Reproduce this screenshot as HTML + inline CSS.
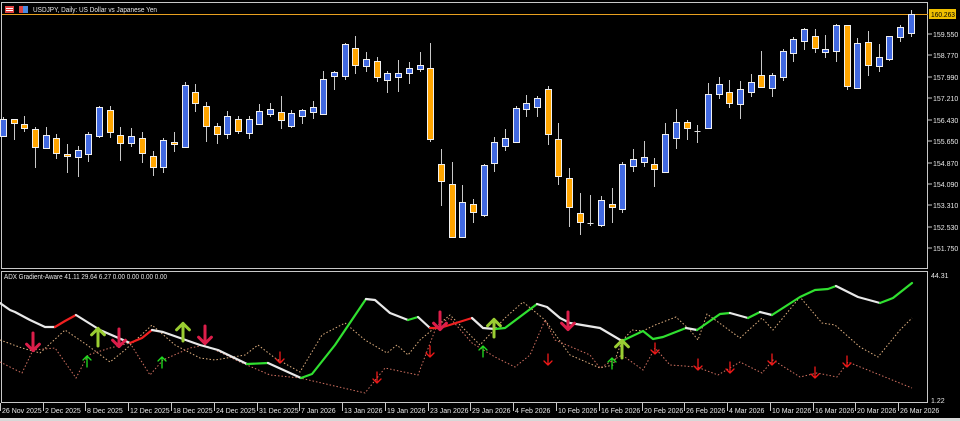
<!DOCTYPE html>
<html><head><meta charset="utf-8"><style>
html,body{margin:0;padding:0;background:#000;width:960px;height:421px;overflow:hidden}
svg{display:block}
text{font-family:"Liberation Sans",sans-serif;font-size:7px;fill:#e8e8e8}
</style></head><body>
<svg id="s" width="960" height="421" viewBox="0 0 960 421" xmlns="http://www.w3.org/2000/svg">
<rect width="960" height="421" fill="#000"/>
<rect x="1.5" y="2.5" width="926" height="266" fill="none" stroke="#c8c8c8"/>
<rect x="1.5" y="271.5" width="926" height="131" fill="none" stroke="#c8c8c8"/>
<line x1="2" y1="14.5" x2="928" y2="14.5" stroke="#e8a020"/>
<rect x="5" y="6" width="9" height="7" fill="#e04040"/><rect x="6" y="8" width="7" height="1" fill="#fff"/><rect x="6" y="10" width="7" height="1" fill="#fff"/>
<rect x="19" y="6" width="9" height="7" fill="#4a8ae0"/><rect x="19" y="6" width="4" height="7" fill="#e04040"/>
<text x="33" y="12" textLength="124" lengthAdjust="spacingAndGlyphs">USDJPY, Daily:  US Dollar vs Japanese Yen</text>
<g id="candles"></g>
<g stroke="#c8c8c8">
<line x1="928" y1="34" x2="932" y2="34"/><line x1="928" y1="55" x2="932" y2="55"/><line x1="928" y1="77" x2="932" y2="77"/><line x1="928" y1="98" x2="932" y2="98"/><line x1="928" y1="120" x2="932" y2="120"/><line x1="928" y1="141" x2="932" y2="141"/><line x1="928" y1="163" x2="932" y2="163"/><line x1="928" y1="184" x2="932" y2="184"/><line x1="928" y1="205" x2="932" y2="205"/><line x1="928" y1="227" x2="932" y2="227"/><line x1="928" y1="248" x2="932" y2="248"/>
</g>
<rect x="929" y="9" width="27" height="10" fill="#f0c000"/>
<text x="931" y="17" style="fill:#000" textLength="24" lengthAdjust="spacingAndGlyphs">160.263</text>
<g id="pl"></g>
<text x="931" y="278">44.31</text><text x="931" y="403">1.22</text>
<text x="4" y="279" textLength="163" lengthAdjust="spacingAndGlyphs">ADX Gradient-Aware 41.11 29.64 6.27 0.00 0.00 0.00 0.00</text>
<polyline fill="none" stroke="#e0b080" stroke-width="1" stroke-dasharray="1.5,2" points="0,340 22,348 40,353 65,330 87,345 110,362 125,350 152,325 175,345 200,358 215,360 245,355 258,345 275,358 300,372 322,335 345,323 365,340 387,353 397,345 408,355 420,340 450,315 480,345 505,318 523,302 545,320 570,355 600,368 613,365 622,341 632,330 643,331 655,325 676,317 690,330 698,340 707,314 740,338 762,318 773,330 800,297 822,323 835,325 860,347 878,357 900,330 912,318"/>
<polyline fill="none" stroke="#d07060" stroke-width="1" stroke-dasharray="1.5,2" points="0,362 22,373 33,350 55,348 76,378 88,355 110,348 130,343 150,375 163,360 190,348 205,345 240,362 270,375 300,378 365,393 385,368 418,375 437,325 450,318 472,343 495,357 515,367 530,355 545,320 555,340 590,355 600,368 622,355 643,370 655,348 670,365 697,367 718,375 740,362 762,373 773,360 800,377 817,373 837,377 848,362 912,388"/>
<g fill="none" stroke-width="2.2" stroke-linejoin="round" stroke-linecap="round">
<polyline stroke="#e8e8e8" points="0,303 10,310 15,312 30,320 45,327 55,327"/>
<polyline stroke="#f02020" points="55,327 65,321 76,315"/>
<polyline stroke="#e8e8e8" points="76,315 100,330 130,343"/>
<polyline stroke="#f02020" points="130,343 142,338 152,330"/>
<polyline stroke="#e8e8e8" points="152,330 163,332 200,345 218,350 247,364"/>
<polyline stroke="#30e030" points="247,364 268,363"/>
<polyline stroke="#e8e8e8" points="268,363 301,378"/>
<polyline stroke="#30e030" points="301,378 312,374 335,345 366,299"/>
<polyline stroke="#e8e8e8" points="366,299 375,300 390,313 408,320"/>
<polyline stroke="#30e030" points="408,320 418,317"/>
<polyline stroke="#e8e8e8" points="418,317 430,328"/>
<polyline stroke="#f02020" points="430,328 440,328 472,318"/>
<polyline stroke="#e8e8e8" points="472,318 483,328 495,329"/>
<polyline stroke="#30e030" points="495,329 505,328 537,304"/>
<polyline stroke="#e8e8e8" points="537,304 547,307 560,318 570,323 600,328 622,341"/>
<polyline stroke="#30e030" points="622,341 643,331 653,339 663,337 686,328"/>
<polyline stroke="#e8e8e8" points="686,328 697,330"/>
<polyline stroke="#30e030" points="697,330 720,314 730,313"/>
<polyline stroke="#e8e8e8" points="730,313 748,318"/>
<polyline stroke="#30e030" points="748,318 760,312"/>
<polyline stroke="#e8e8e8" points="760,312 772,315"/>
<polyline stroke="#30e030" points="772,315 800,297 815,290 828,289 836,286"/>
<polyline stroke="#e8e8e8" points="836,286 858,297 880,303"/>
<polyline stroke="#30e030" points="880,303 893,298 912,283"/>
</g>
<g id="arrows"></g>
<g stroke="#c8c8c8" id="ticks"></g>
<g id="tl">
<text x="2" y="413">26 Nov 2025</text><text x="45" y="413">2 Dec 2025</text><text x="87" y="413">8 Dec 2025</text><text x="130" y="413">12 Dec 2025</text><text x="173" y="413">18 Dec 2025</text><text x="216" y="413">24 Dec 2025</text><text x="259" y="413">31 Dec 2025</text><text x="301" y="413">7 Jan 2026</text><text x="344" y="413">13 Jan 2026</text><text x="387" y="413">19 Jan 2026</text><text x="430" y="413">23 Jan 2026</text><text x="472" y="413">29 Jan 2026</text><text x="515" y="413">4 Feb 2026</text><text x="558" y="413">10 Feb 2026</text><text x="601" y="413">16 Feb 2026</text><text x="644" y="413">20 Feb 2026</text><text x="686" y="413">26 Feb 2026</text><text x="729" y="413">4 Mar 2026</text><text x="772" y="413">10 Mar 2026</text><text x="815" y="413">16 Mar 2026</text><text x="857" y="413">20 Mar 2026</text><text x="900" y="413">26 Mar 2026</text>
</g>
<text x="933" y="37">159.550</text><text x="933" y="58">158.770</text><text x="933" y="80">157.990</text><text x="933" y="101">157.210</text><text x="933" y="123">156.430</text><text x="933" y="144">155.650</text><text x="933" y="166">154.870</text><text x="933" y="187">154.090</text><text x="933" y="208">153.310</text><text x="933" y="230">152.530</text><text x="933" y="251">151.750</text>
<rect x="0" y="418" width="960" height="3" fill="#d8d8d8"/>
</svg>
<script>
var NS="http://www.w3.org/2000/svg";
function el(p,t,a){var e=document.createElementNS(NS,t);for(var k in a)e.setAttribute(k,a[k]);p.appendChild(e);return e;}
var C=[["b",119,136,117,137],["o",119,123,119,140],["o",124,128,116,132],["o",129,147,127,168],["b",135,148,127,148],["o",138,153,134,159],["o",154,156,144,173],["b",150,157,146,177],["b",134,154,132,162],["b",107,136,106,138],["o",110,132,106,138],["o",135,143,127,161],["b",136,143,128,147],["o",138,153,132,163],["o",156,167,151,176],["b",140,167,138,173],["o",142,144,132,152],["b",85,147,82,148],["o",92,103,84,112],["o",106,126,102,142],["o",126,134,123,144],["b",116,134,111,139],["o",119,131,116,134],
["b",119,133,116,139],["b",111,124,104,125],["b",109,114,103,117],["o",112,120,96,129],["b",113,126,110,128],["b",110,116,109,124],["b",107,112,101,119],["b",79,114,71,114],["b",72,76,71,90],["b",44,76,43,80],["o",48,65,36,74],["b",59,66,52,72],["o",61,77,57,82],["b",73,80,71,93],["b",73,77,60,92],["b",68,73,62,84],["b",65,69,52,72],["o",68,139,43,142],["o",164,181,149,206],["o",184,237,162,238],["b",202,237,185,238],["o",204,212,199,223],["b",165,215,164,217],["b",142,163,137,172],["b",138,146,129,151],["b",108,142,106,142],["b",103,109,95,117],["b",98,107,96,117],["o",89,134,86,145],["o",139,176,123,185],["o",178,207,168,227],["o",213,222,193,235],["d",223,224,195,226],["b",200,225,196,227],["o",204,207,188,223],["b",164,209,162,213],["b",159,166,149,172],["b",157,162,141,167],["o",164,169,158,187],["b",134,172,123,173],["b",122,138,109,149],["o",122,128,120,140],["d",131,131,125,143],["b",94,128,83,129],["b",84,94,77,99],["o",92,103,80,108],["b",89,104,81,119],["b",82,92,74,97],["o",75,87,51,87],["b",75,88,73,97],["b",51,77,49,81],["b",39,53,37,62],["b",29,41,28,50],["o",36,48,29,53],["b",49,52,35,58],["b",25,51,24,62],["o",25,86,25,90],["b",43,88,38,88],["o",42,65,31,76],["b",57,66,44,72],["b",36,59,36,61],["b",27,37,25,42],["b",14,33,10,37]];
var g=document.getElementById("candles");
C.forEach(function(c,i){var x=Math.round(3+i*10.68)+0.5;
 el(g,"line",{x1:x,x2:x,y1:c[3],y2:c[4],stroke:"#c8c8c8"});
 if(c[0]=="d"){el(g,"line",{x1:x-3,x2:x+3,y1:c[1]+0.5,y2:c[1]+0.5,stroke:"#e0e0e0"});return;}
 var h=Math.max(2,c[2]-c[1]);
 el(g,"rect",{x:x-3,y:c[1]+0.5,width:6,height:h,fill:c[0]=="b"?"#4169e1":"#ffa500",stroke:"#f0f0f0","stroke-width":1});
});
var a=document.getElementById("arrows");
function arrow(x,y,dir,big,col){var s=big?1.6:1;var d=dir;
 var p="M"+x+","+(y+d*6*s)+" L"+(x-4*s)+","+(y+d*2*s)+" M"+x+","+(y+d*6*s)+" L"+(x+4*s)+","+(y+d*2*s)+" M"+x+","+(y+d*6*s)+" L"+x+","+(y-d*5*s);
 el(a,"path",{d:p,stroke:col,"stroke-width":big?3:1.3,fill:"none","stroke-linecap":"round"});}
[[33,341],[119,337],[205,334],[440,320],[568,320]].forEach(function(p){arrow(p[0],p[1],1,true,"#dc1e4a");});
[[98,338],[183,333],[494,329],[622,350]].forEach(function(p){arrow(p[0],p[1],-1,true,"#9acd32");});
[[87,362],[162,363],[483,352],[612,364]].forEach(function(p){arrow(p[0],p[1],-1,false,"#20e020");});
[[280,357],[377,377],[430,351],[548,359],[655,348],[698,364],[730,367],[772,359],[815,372],[847,361]].forEach(function(p){arrow(p[0],p[1],1,false,"#f01818");});
var t=document.getElementById("ticks");
[2,45,87,130,173,216,259,301,344,387,430,472,515,558,601,644,686,729,772,815,857,900].forEach(function(x){el(t,"line",{x1:x-1.5,x2:x-1.5,y1:403,y2:411});});
</script>
</body></html>
